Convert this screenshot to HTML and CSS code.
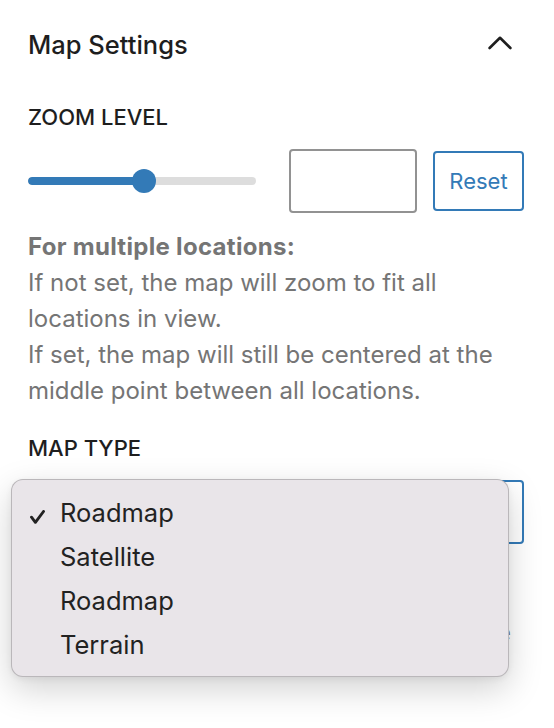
FILE: index.html
```html
<!DOCTYPE html>
<html lang="en">
<head>
<meta charset="utf-8">
<title>Map Settings</title>
<link rel="stylesheet" href="styles.css">
</head>
<body>
<div class="panel">
  <div class="panel-header">
    <h2 class="panel-title">Map Settings</h2>
    <svg class="chevron" width="24" height="14" viewBox="0 0 24 14" aria-hidden="true">
      <polyline points="1.6,12 12,1.8 22.4,12" fill="none" stroke="#1e1e1e" stroke-width="2.6" stroke-linecap="round" stroke-linejoin="round"/>
    </svg>
  </div>

  <div class="field">
    <div class="label">Zoom level</div>
    <div class="zoom-row">
      <div class="slider">
        <div class="track"><div class="fill" style="width:116px"></div></div>
        <div class="thumb" style="left:116px"></div>
      </div>
      <input class="num" type="text" aria-label="Zoom level">
      <button class="reset" type="button">Reset</button>
    </div>
    <p class="help"><strong>For multiple locations:</strong><br>If not set, the map will zoom to fit all locations in view.<br>If set, the map will still be centered at the middle point between all locations.</p>
  </div>

  <div class="field field-type">
    <div class="label">Map type</div>
    <div class="select-wrap">
      <div class="select"></div>
      <ul class="menu">
        <li class="option"><svg class="check" width="15" height="14" viewBox="0 0 15 14" aria-hidden="true"><polyline points="1.5,7.2 5.4,12.3 13.5,1.5" fill="none" stroke="#222" stroke-width="2.9" stroke-linecap="round" stroke-linejoin="round"/></svg>Roadmap</li>
        <li class="option">Satellite</li>
        <li class="option">Roadmap</li>
        <li class="option">Terrain</li>
      </ul>
    </div>
    <p class="help help-under">Hybrid and terrain views depend on the</p>
  </div>
</div>
</body>
</html>
```

FILE: styles.css
```css
html, body {
  margin: 0;
  padding: 0;
  background: #ffffff;
}

body {
  min-height: 100vh;
  font-family: Inter, "Noto Sans", "Liberation Sans", sans-serif;
  color: #1e1e1e;
}

.panel {
  padding: 0 30px 0 28px;
}

.panel-header {
  display: flex;
  align-items: center;
  justify-content: space-between;
  height: 90px;
}

.panel-title {
  margin: 0;
  font-size: 25.5px;
  line-height: 32px;
  font-weight: 500;
  color: #1e1e1e;
}

.chevron {
  margin-right: 12px;
  margin-bottom: 5px;
}

.field {
  padding-top: 15px;
}

.field-type {
  padding-top: 27px;
}

.label {
  font-size: 22px;
  font-weight: 500;
  text-transform: uppercase;
  line-height: 24px;
  color: #1e1e1e;
}

.zoom-row {
  display: flex;
  align-items: center;
  margin-top: 20px;
}

.slider {
  position: relative;
  width: 228px;
  height: 24px;
  display: flex;
  align-items: center;
}

.track {
  width: 100%;
  height: 8px;
  border-radius: 4px;
  background: #dddddd;
  overflow: hidden;
}

.fill {
  height: 100%;
  background: #337ab7;
  border-radius: 4px;
}

.thumb {
  position: absolute;
  top: 0;
  width: 24px;
  height: 24px;
  margin-left: -12px;
  border-radius: 50%;
  background: #337ab7;
}

.num {
  box-sizing: border-box;
  width: 128px;
  height: 64px;
  margin-left: 33px;
  border: 2px solid #929292;
  border-radius: 4px;
  background: #fff;
  font: inherit;
}

.reset {
  box-sizing: border-box;
  width: 91px;
  height: 60px;
  margin-left: 16px;
  border: 2px solid #337ab7;
  border-radius: 4px;
  background: #fff;
  color: #337ab7;
  font-family: inherit;
  font-size: 22px;
  font-weight: 400;
  padding: 0;
}

.help {
  margin: 16px 0 0;
  font-size: 24px;
  line-height: 36px;
  color: #757575;
}

.help strong {
  font-weight: 700;
  letter-spacing: 0.3px;
}

.select-wrap {
  position: relative;
  margin-top: 20px;
}

.select {
  box-sizing: border-box;
  height: 64px;
  border: 2px solid #337ab7;
  border-radius: 4px;
  background: #fff;
}

.menu {
  position: absolute;
  z-index: 2;
  left: -17px;
  top: -1px;
  width: 498px;
  box-sizing: border-box;
  margin: 0;
  padding: 11px 0 9px;
  list-style: none;
  background: #e9e5e9;
  border: 1px solid rgba(0, 0, 0, 0.2);
  border-radius: 12px;
  box-shadow: 0 12px 34px rgba(0, 0, 0, 0.18), 0 2px 6px rgba(0, 0, 0, 0.06);
}

.option {
  position: relative;
  height: 44px;
  line-height: 44px;
  padding-left: 48px;
  font-size: 25.5px;
  color: #222222;
}

.check {
  position: absolute;
  left: 18px;
  top: 19px;
}

.help-under {
  margin-top: 71px;
  padding-right: 13px;
  text-align: right;
}
```
